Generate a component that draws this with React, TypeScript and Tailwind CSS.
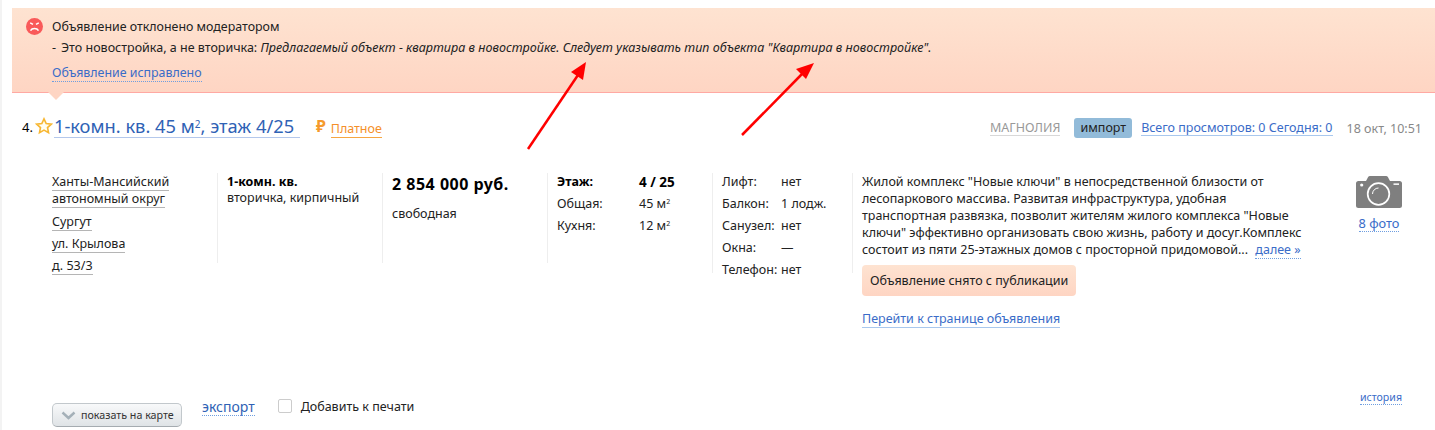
const font = "font-['Noto_Sans','Open_Sans',sans-serif]"

function Row({ label, value, bold }: { label: string; value: React.ReactNode; bold?: boolean }) {
  return (
    <div className={`flex h-[22px] items-center ${bold ? "font-bold text-black" : ""}`}>
      <span className="w-[82px]">{label}</span>
      <span>{value}</span>
    </div>
  )
}

function Feature({ label, value }: { label: string; value: string }) {
  return (
    <div className="flex h-[22px] items-center">
      <span className="w-[59px]">{label}</span>
      <span>{value}</span>
    </div>
  )
}

function AddressLink({ children }: { children: React.ReactNode }) {
  return <span className="inline-block border-b border-[#b5b5b5] leading-[16px]">{children}</span>
}

function Arrows() {
  return (
    <svg className="pointer-events-none absolute left-0 top-0" width="1435" height="160" viewBox="0 0 1435 160">
      <line x1="528" y1="149" x2="578" y2="75" stroke="#f00" strokeWidth="2.5" />
      <polygon points="586,62 583,80 571,72" fill="#f00" />
      <line x1="742" y1="135" x2="802" y2="74" stroke="#f00" strokeWidth="2.5" />
      <polygon points="814,63 806,79 796,69" fill="#f00" />
    </svg>
  )
}

export default function App() {
  return (
    <div className={`relative h-[430px] w-[1435px] overflow-hidden bg-white pl-[2px] ${font} text-[12.5px] text-[#222]`}>
      <div className="h-full bg-white pl-[10px] shadow-[-2px_0_0_#f3f3f3]">
        <div className="h-[8px]" />
        {/* banner */}
        <div className="relative h-[85px] border-b border-[#ffa9a3] bg-gradient-to-b from-[#fee3d1] to-[#fed5c3] pl-[14px] pt-[11px]">
          <div className="flex items-start">
            <svg width="17" height="17" viewBox="0 0 17 17" className="mt-[-1px] shrink-0">
              <circle cx="8.5" cy="8.5" r="8.5" fill="#f95a5a" />
              <path d="M4.2 4.8L7 6.4M12.8 4.8L10 6.4" stroke="#fff" strokeWidth="1.5" />
              <path d="M4.5 12.6C6 9.8 11 9.8 12.5 12.6" stroke="#fff" strokeWidth="1.5" fill="none" />
            </svg>
            <div className="ml-[9px]">
              <div className="text-[12.4px] leading-[16px] text-[#222]">Объявление отклонено модератором</div>
              <div className="mt-[5px] leading-[16px] text-[#222]">
                <span className="mr-[5px]">-</span>Это новостройка, а не вторичка:{" "}
                <i className="text-[12.56px]">Предлагаемый объект - квартира в новостройке. Следует указывать тип объекта "Квартира в новостройке".</i>
              </div>
              <span className="mt-[9px] inline-block border-b border-dotted border-[#6f9ee0] text-[12.4px] leading-[16px] text-[#3a6cc8]">
                Объявление исправлено
              </span>
            </div>
          </div>
          <span className="absolute left-[36px] top-[84px] h-0 w-0 border-x-[8px] border-t-[8px] border-x-transparent border-t-[#fed5c3]" />
        </div>

        {/* title row */}
        <div className="flex h-[48px] items-end pb-[3px] pl-[10px] pr-[13px]">
          <span className="mb-[1px] text-[13px] text-black">4.</span>
          <svg width="18" height="18" viewBox="0 0 24 24" className="mb-[3px] ml-[2px] mr-[1px]">
            <path d="M12 2.5l2.9 6.2 6.8.8-5 4.6 1.3 6.7L12 17.5l-6 3.3 1.3-6.7-5-4.6 6.8-.8z" fill="#fffdf0" stroke="#f7b733" strokeWidth="2.2" />
          </svg>
          <span className="border-b border-[#b4c8ec] pr-[6px] text-[18.3px] leading-[23px] text-[#2f62b5]">
            1-комн. кв. 45 м<sup className="text-[10px]">2</sup>, этаж 4/25
          </span>
          <span className="mb-[2px] ml-[16px] text-[16px] font-bold leading-[20px] text-[#f59a2c]">₽</span>
          <span className="ml-[5px] border-b border-[#f6a642] leading-[16px] text-[#f58f2a]">Платное</span>
          <div className="ml-auto flex items-center">
            <span className="border-b border-[#d8d8d8] leading-[15px] text-[#999]">МАГНОЛИЯ</span>
            <span className="ml-[14px] rounded-[3px] bg-[#92bbd9] px-[6px] py-[1px] leading-[18px] text-[#222]">импорт</span>
            <span className="ml-[9px] border-b border-[#a9c8ee] leading-[15px] text-[#3a6cc8]">Всего просмотров: 0 Сегодня: 0</span>
            <span className="ml-[14px] leading-[15px] text-[#888]">18 окт, 10:51</span>
          </div>
        </div>

        {/* listing */}
        <div className="mt-[32px] flex h-[230px] items-start pl-[40px]">
          <div className="flex h-[90px] w-[165px] shrink-0 flex-col items-start pt-[1px]">
            <AddressLink>Ханты-Мансийский</AddressLink>
            <AddressLink>автономный округ</AddressLink>
            <div className="mt-[6px] flex"><AddressLink>Сургут</AddressLink></div>
            <div className="mt-[5px] flex"><AddressLink>ул. Крылова</AddressLink></div>
            <div className="mt-[5px] flex"><AddressLink>д. 53/3</AddressLink></div>
          </div>
          <div className="h-[90px] w-[165px] shrink-0 border-l border-[#eee] pl-[9px] pt-[1px] leading-[16px]">
            <div className="font-bold text-black">1-комн. кв.</div>
            <div>вторичка, кирпичный</div>
          </div>
          <div className="h-[90px] w-[165px] shrink-0 border-l border-[#eee] pl-[9px]">
            <div className="text-[16px] font-bold leading-[22px] tracking-[0.5px] text-black">2 854 000 руб.</div>
            <div className="mt-[10px] leading-[18px]">свободная</div>
          </div>
          <div className="h-[90px] w-[165px] shrink-0 border-l border-[#eee] pl-[9px]">
            <div className="mt-[-2px]">
              <Row bold label="Этаж:" value={<span className="text-[13.5px]">4 / 25</span>} />
              <Row label="Общая:" value={<>45 м<sup className="text-[7px]">2</sup></>} />
              <Row label="Кухня:" value={<>12 м<sup className="text-[7px]">2</sup></>} />
            </div>
          </div>
          <div className="h-[100px] w-[140px] shrink-0 border-l border-[#eee] pl-[9px]">
            <div className="mt-[-2px]">
              <Feature label="Лифт:" value="нет" />
              <Feature label="Балкон:" value="1 лодж." />
              <Feature label="Санузел:" value="нет" />
              <Feature label="Окна:" value="—" />
              <Feature label="Телефон:" value="нет" />
            </div>
          </div>
          <div className="relative w-[460px] shrink-0 pl-[10px]">
            <span className="absolute left-0 top-0 h-[100px] w-px bg-[#eee]" />
            <p className="leading-[17px]">
              Жилой комплекс "Новые ключи" в непосредственной близости от<br />
              лесопаркового массива. Развитая инфраструктура, удобная<br />
              транспортная развязка, позволит жителям жилого комплекса "Новые<br />
              ключи" эффективно организовать свою жизнь, работу и досуг.Комплекс<br />
              состоит из пяти 25-этажных домов с просторной придомовой...{" "}
              <span className="ml-[4px] border-b border-dotted border-[#6f9ee0] text-[#3a6cc8]">далее »</span>
            </p>
            <div className="mt-[7px] inline-block rounded-[4px] bg-gradient-to-b from-[#fee3d1] to-[#fed5c3] px-[8px] pb-[7px] pt-[8px] leading-[16px]">
              Объявление снято с публикации
            </div>
            <div className="mt-[14px]">
              <span className="border-b border-[#a9c8ee] leading-[16px] text-[#3a6cc8]">Перейти к странице объявления</span>
            </div>
          </div>
          <div className="ml-[44px] mt-[3px] flex w-[46px] shrink-0 flex-col items-center">
            <svg width="46" height="32" viewBox="0 0 46 32">
              <path d="M2.5 5H10L12 1.2Q12.6 0 14 0H30Q31.4 0 32 1.2L34 5H43.5A2.5 2.5 0 0 1 46 7.5V29.5A2.5 2.5 0 0 1 43.5 32H2.5A2.5 2.5 0 0 1 0 29.5V7.5A2.5 2.5 0 0 1 2.5 5Z" fill="#7f7f7f" />
              <circle cx="22.5" cy="18" r="10.8" fill="none" stroke="#fff" strokeWidth="1.7" />
              <path d="M16.5 18a6 6 0 0 1 6-6" stroke="#fff" strokeWidth="1" fill="none" />
              <circle cx="5.7" cy="9" r="1.6" fill="#fff" />
              <rect x="37.5" y="7.4" width="5.5" height="1.5" fill="#fff" />
            </svg>
            <span className="mt-[7px] border-b border-dotted border-[#6f9ee0] text-[12.8px] leading-[16px] text-[#3a6cc8]">8 фото</span>
          </div>
        </div>
      </div>

      {/* footer row */}
      <div className="absolute bottom-0 left-[52px] right-[33px] flex h-[36px] items-start">
        <button className="mt-[9px] flex h-[24px] w-[130px] items-center rounded-[5px] border border-[#c2c8cc] border-b-[#a5abb0] bg-gradient-to-b from-[#f8f9fa] to-[#dfe3e6] pl-[8px] text-[10.7px] text-[#333]">
          <svg width="15" height="9" viewBox="0 0 15 9" className="mr-[5px]">
            <path d="M1.5 1.5L7.5 7l6-5.5" stroke="#a4b0b8" strokeWidth="2.4" fill="none" />
          </svg>
          показать на карте
        </button>
        <span className="ml-[20px] mt-[4px] border-b border-dotted border-[#6f9ee0] text-[14px] leading-[17px] text-[#2f62b5]">экспорт</span>
        <span className="ml-[23px] mt-[5px] h-[14px] w-[14px] rounded-[2px] border border-[#ccc] bg-white" />
        <span className="ml-[9px] mt-[4px] leading-[17px]">Добавить к печати</span>
        <span className="ml-auto mt-[-4px] border-b border-dotted border-[#6f9ee0] text-[10.6px] leading-[14px] text-[#3a6cc8]">история</span>
      </div>

      <Arrows />
    </div>
  )
}
